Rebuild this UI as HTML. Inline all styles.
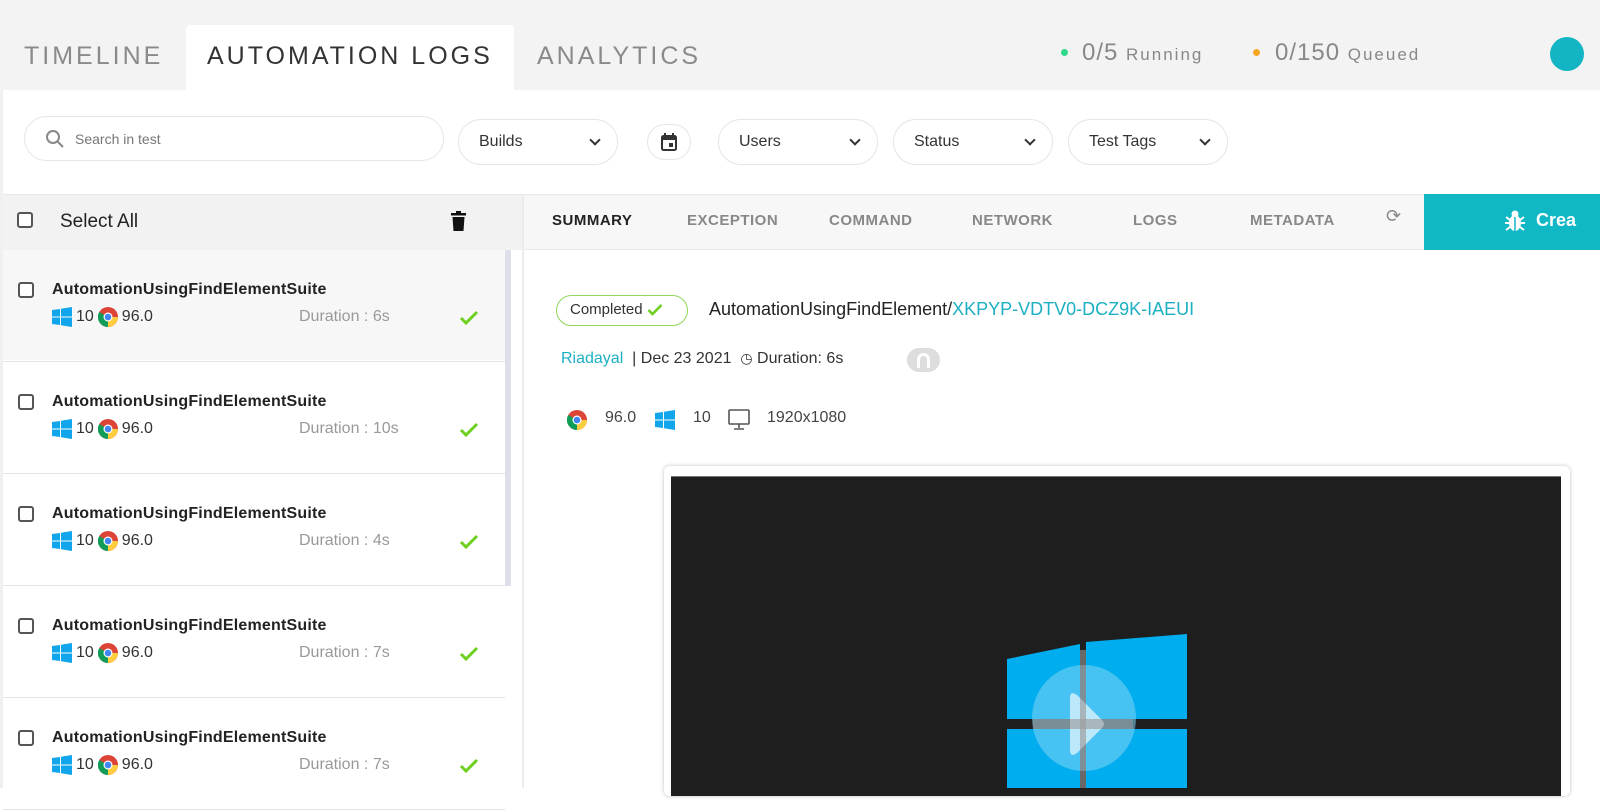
<!DOCTYPE html>
<html><head><style>
*{box-sizing:border-box;margin:0;padding:0}
body{width:1600px;height:788px;overflow:hidden;background:#fff;font-family:"Liberation Sans",sans-serif;position:relative}
.a{position:absolute}
.hdr{left:0;top:0;width:1600px;height:90px;background:#f3f3f3}
.tab{font-size:25px;letter-spacing:3px;color:#8a8a8a;top:42px}
.pill{border:1px solid #e6e6e6;border-radius:24px;background:#fff;height:46px;top:119px;font-size:16px;color:#333;padding:0 20px;line-height:44px}
.chev{position:absolute;right:18px;top:16px;width:8px;height:8px;border-right:2.5px solid #333;border-bottom:2.5px solid #333;transform:rotate(45deg)}
.cb{width:16px;height:16px;border:2px solid #555;border-radius:3px;background:#fff}
.rt{font-size:15px;color:#555;letter-spacing:.5px;top:212px;font-weight:bold}
.item{left:3px;width:502px;height:112px;border-bottom:1px solid #e4e4e4}
.item .t{position:absolute;left:49px;top:31px;font-size:16px;font-weight:bold;color:#222;letter-spacing:.2px}
.item .cb{position:absolute;left:15px;top:32px}
.item .m{position:absolute;left:49px;top:57px;font-size:16px;color:#333;display:flex;align-items:center;gap:4px}
.item .d{position:absolute;left:296px;top:58px;font-size:16px;color:#999}
.item .ck{position:absolute;left:456px;top:60px}
</style></head><body>
<div class="a hdr"></div>
<div class="a" style="left:186px;top:25px;width:328px;height:66px;background:#fff;border-radius:4px 4px 0 0"></div>
<div class="a tab" style="left:24px">TIMELINE</div>
<div class="a tab" style="left:207px;color:#333">AUTOMATION LOGS</div>
<div class="a tab" style="left:537px">ANALYTICS</div>
<div class="a" style="left:1061px;top:49px;width:7px;height:7px;border-radius:50%;background:#2fd88a"></div>
<div class="a" style="left:1082px;top:39px;font-size:24px;color:#888;letter-spacing:1px">0/5 <span style="font-size:17px;letter-spacing:2px">Running</span></div>
<div class="a" style="left:1253px;top:49px;width:7px;height:7px;border-radius:50%;background:#f5a623"></div>
<div class="a" style="left:1275px;top:39px;font-size:24px;color:#888;letter-spacing:1px">0/150 <span style="font-size:17px;letter-spacing:2px">Queued</span></div>
<div class="a" style="left:1550px;top:37px;width:34px;height:34px;border-radius:50%;background:#13b4c4"></div>

<div class="a pill" style="left:24px;top:116px;width:420px;height:45px;padding-left:50px;font-size:14px;color:#777">
<svg class="a" style="left:20px;top:12px" width="20" height="20" viewBox="0 0 20 20"><circle cx="8" cy="8" r="6" fill="none" stroke="#888" stroke-width="2"/><line x1="12.5" y1="12.5" x2="18" y2="18" stroke="#888" stroke-width="2"/></svg>Search in test</div>
<div class="a pill" style="left:458px;width:160px;top:119px">Builds<span class="chev"></span></div>
<div class="a pill" style="left:647px;top:124px;width:44px;height:36px;padding:0">
<svg class="a" style="left:13px;top:8px" width="16" height="18" viewBox="0 0 16 18"><rect x="1" y="3" width="14" height="14" rx="1.5" fill="none" stroke="#333" stroke-width="2"/><rect x="1" y="3" width="14" height="4" fill="#333"/><rect x="3" y="0" width="2" height="4" fill="#333"/><rect x="11" y="0" width="2" height="4" fill="#333"/><rect x="8" y="10" width="4" height="4" fill="#333"/></svg></div>
<div class="a pill" style="left:718px;width:160px">Users<span class="chev"></span></div>
<div class="a pill" style="left:893px;width:160px">Status<span class="chev"></span></div>
<div class="a pill" style="left:1068px;width:160px">Test Tags<span class="chev"></span></div>

<div class="a" style="left:0;top:90px;width:3px;height:698px;background:#f0f0f0"></div>
<div class="a" style="left:3px;top:194px;width:519px;height:56px;background:#f2f2f2;border-top:1px solid #e8e8e8"></div>
<div class="a cb" style="left:17px;top:212px"></div>
<div class="a" style="left:60px;top:211px;font-size:19px;color:#222">Select All</div>
<svg class="a" style="left:451px;top:211px" width="15" height="20" viewBox="0 0 15 20"><rect x="0" y="2" width="15" height="2.5" fill="#111"/><rect x="5" y="0" width="5" height="2" fill="#111"/><path d="M1.5 6h12l-1 14h-10z" fill="#111"/></svg>
<div class="a" style="left:522px;top:194px;width:2px;height:594px;background:#ececec"></div>
<div class="a" style="left:505px;top:250px;width:6px;height:336px;background:#dde0ea"></div>

<div class="a" style="left:524px;top:194px;width:900px;height:56px;background:#f7f7f7;border-top:1px solid #e8e8e8;border-bottom:1px solid #e8e8e8"></div>
<div class="a rt" style="left:552px;color:#222">SUMMARY</div>
<div class="a rt" style="left:687px;color:#888">EXCEPTION</div>
<div class="a rt" style="left:829px;color:#888">COMMAND</div>
<div class="a rt" style="left:972px;color:#888">NETWORK</div>
<div class="a rt" style="left:1133px;color:#888">LOGS</div>
<div class="a rt" style="left:1250px;color:#888">METADATA</div>
<div class="a" style="left:1386px;top:206px;font-size:18px;color:#888">⟳</div>
<div class="a" style="left:1424px;top:194px;width:176px;height:56px;background:#10b7c5"></div>
<svg class="a" style="left:1504px;top:209px" width="22" height="24" viewBox="0 0 22 24"><ellipse cx="11" cy="14" rx="6" ry="8" fill="#fff"/><circle cx="11" cy="5" r="3.5" fill="#fff"/><path d="M2 8l4 3M20 8l-4 3M1 14h5M21 14h-5M2 21l4-3M20 21l-4-3" stroke="#fff" stroke-width="2"/><line x1="11" y1="8" x2="11" y2="22" stroke="#10b7c5" stroke-width="1.5"/></svg>
<div class="a" style="left:1536px;top:210px;font-size:18px;color:#fff;font-weight:bold">Crea</div>

<div class="a" style="left:3px;top:250px;width:502px;height:110px;background:#f7f7f7"></div>
<!-- items -->
<div class="a item" style="top:250px"><span class="cb"></span><div class="t">AutomationUsingFindElementSuite</div><div class="m"><svg width="20" height="20" viewBox="0 0 20 20"><path d="M0 3l8-1v7.5H0zM9 1.8L20 0v9.5H9zM0 10.5h8V18l-8-1zM9 10.5h11V20L9 18.2z" fill="#11a5ec"/></svg>10 <svg width="20" height="20" viewBox="0 0 20 20"><circle cx="10" cy="10" r="10" fill="#db4437"/><path d="M10 10L1.3 5A10 10 0 0 0 10 20z" fill="#0f9d58"/><path d="M10 10h10A10 10 0 0 1 10 20z" fill="#ffcd40"/><circle cx="10" cy="10" r="4.5" fill="#fff"/><circle cx="10" cy="10" r="3.3" fill="#4285f4"/></svg>96.0</div><div class="d">Duration : 6s</div><svg class="ck" width="20" height="15" viewBox="0 0 20 15"><path d="M2 8l5 5L18 2" stroke="#6fcf1f" stroke-width="3" fill="none"/></svg></div>
<div class="a item" style="top:362px"><span class="cb"></span><div class="t">AutomationUsingFindElementSuite</div><div class="m"><svg width="20" height="20" viewBox="0 0 20 20"><path d="M0 3l8-1v7.5H0zM9 1.8L20 0v9.5H9zM0 10.5h8V18l-8-1zM9 10.5h11V20L9 18.2z" fill="#11a5ec"/></svg>10 <svg width="20" height="20" viewBox="0 0 20 20"><circle cx="10" cy="10" r="10" fill="#db4437"/><path d="M10 10L1.3 5A10 10 0 0 0 10 20z" fill="#0f9d58"/><path d="M10 10h10A10 10 0 0 1 10 20z" fill="#ffcd40"/><circle cx="10" cy="10" r="4.5" fill="#fff"/><circle cx="10" cy="10" r="3.3" fill="#4285f4"/></svg>96.0</div><div class="d">Duration : 10s</div><svg class="ck" width="20" height="15" viewBox="0 0 20 15"><path d="M2 8l5 5L18 2" stroke="#6fcf1f" stroke-width="3" fill="none"/></svg></div>
<div class="a item" style="top:474px"><span class="cb"></span><div class="t">AutomationUsingFindElementSuite</div><div class="m"><svg width="20" height="20" viewBox="0 0 20 20"><path d="M0 3l8-1v7.5H0zM9 1.8L20 0v9.5H9zM0 10.5h8V18l-8-1zM9 10.5h11V20L9 18.2z" fill="#11a5ec"/></svg>10 <svg width="20" height="20" viewBox="0 0 20 20"><circle cx="10" cy="10" r="10" fill="#db4437"/><path d="M10 10L1.3 5A10 10 0 0 0 10 20z" fill="#0f9d58"/><path d="M10 10h10A10 10 0 0 1 10 20z" fill="#ffcd40"/><circle cx="10" cy="10" r="4.5" fill="#fff"/><circle cx="10" cy="10" r="3.3" fill="#4285f4"/></svg>96.0</div><div class="d">Duration : 4s</div><svg class="ck" width="20" height="15" viewBox="0 0 20 15"><path d="M2 8l5 5L18 2" stroke="#6fcf1f" stroke-width="3" fill="none"/></svg></div>
<div class="a item" style="top:586px"><span class="cb"></span><div class="t">AutomationUsingFindElementSuite</div><div class="m"><svg width="20" height="20" viewBox="0 0 20 20"><path d="M0 3l8-1v7.5H0zM9 1.8L20 0v9.5H9zM0 10.5h8V18l-8-1zM9 10.5h11V20L9 18.2z" fill="#11a5ec"/></svg>10 <svg width="20" height="20" viewBox="0 0 20 20"><circle cx="10" cy="10" r="10" fill="#db4437"/><path d="M10 10L1.3 5A10 10 0 0 0 10 20z" fill="#0f9d58"/><path d="M10 10h10A10 10 0 0 1 10 20z" fill="#ffcd40"/><circle cx="10" cy="10" r="4.5" fill="#fff"/><circle cx="10" cy="10" r="3.3" fill="#4285f4"/></svg>96.0</div><div class="d">Duration : 7s</div><svg class="ck" width="20" height="15" viewBox="0 0 20 15"><path d="M2 8l5 5L18 2" stroke="#6fcf1f" stroke-width="3" fill="none"/></svg></div>
<div class="a item" style="top:698px"><span class="cb"></span><div class="t">AutomationUsingFindElementSuite</div><div class="m"><svg width="20" height="20" viewBox="0 0 20 20"><path d="M0 3l8-1v7.5H0zM9 1.8L20 0v9.5H9zM0 10.5h8V18l-8-1zM9 10.5h11V20L9 18.2z" fill="#11a5ec"/></svg>10 <svg width="20" height="20" viewBox="0 0 20 20"><circle cx="10" cy="10" r="10" fill="#db4437"/><path d="M10 10L1.3 5A10 10 0 0 0 10 20z" fill="#0f9d58"/><path d="M10 10h10A10 10 0 0 1 10 20z" fill="#ffcd40"/><circle cx="10" cy="10" r="4.5" fill="#fff"/><circle cx="10" cy="10" r="3.3" fill="#4285f4"/></svg>96.0</div><div class="d">Duration : 7s</div><svg class="ck" width="20" height="15" viewBox="0 0 20 15"><path d="M2 8l5 5L18 2" stroke="#6fcf1f" stroke-width="3" fill="none"/></svg></div>

<!-- summary -->
<div class="a" style="left:556px;top:295px;width:132px;height:31px;border:1.5px solid #8fd65a;border-radius:16px;font-size:15px;color:#333;line-height:28px;padding-left:13px">Completed <svg style="vertical-align:-2px" width="16" height="13" viewBox="0 0 16 13"><path d="M1.5 7l4 4L14.5 2" stroke="#6fcf1f" stroke-width="2.6" fill="none"/></svg></div>
<div class="a" style="left:709px;top:299px;font-size:18px;color:#222">AutomationUsingFindElement/<span style="color:#1cb0c2">XKPYP-VDTV0-DCZ9K-IAEUI</span></div>
<div class="a" style="left:561px;top:350px;font-size:16px;color:#333"><span style="color:#1cb0c2">Riadayal</span> &nbsp;| Dec 23 2021 &nbsp;<span style="font-size:14px">◷</span> Duration: 6s</div>
<div class="a" style="left:907px;top:348px;width:33px;height:24px;border-radius:12px;background:#ddd"><div class="a" style="left:10px;top:5px;width:13px;height:15px;border:3px solid #fff;border-bottom:none;border-radius:7px 7px 0 0"></div></div>
<svg class="a" style="left:567px;top:410px" width="20" height="20" viewBox="0 0 20 20"><circle cx="10" cy="10" r="10" fill="#db4437"/><path d="M10 10L1.3 5A10 10 0 0 0 10 20z" fill="#0f9d58"/><path d="M10 10h10A10 10 0 0 1 10 20z" fill="#ffcd40"/><circle cx="10" cy="10" r="4.5" fill="#fff"/><circle cx="10" cy="10" r="3.3" fill="#4285f4"/></svg>
<div class="a" style="left:605px;top:409px;font-size:16px;color:#444">96.0</div>
<svg class="a" style="left:655px;top:410px" width="20" height="20" viewBox="0 0 20 20"><path d="M0 3l8-1v7.5H0zM9 1.8L20 0v9.5H9zM0 10.5h8V18l-8-1zM9 10.5h11V20L9 18.2z" fill="#11a5ec"/></svg>
<div class="a" style="left:693px;top:409px;font-size:16px;color:#444">10</div>
<svg class="a" style="left:728px;top:409px" width="22" height="22" viewBox="0 0 22 22"><rect x="1" y="1" width="20" height="14" rx="1" fill="none" stroke="#555" stroke-width="1.6"/><path d="M11 15v4M6 20h10" stroke="#555" stroke-width="1.6"/></svg>
<div class="a" style="left:767px;top:409px;font-size:16px;color:#444">1920x1080</div>

<div class="a" style="left:664px;top:466px;width:906px;height:330px;background:#fff;border-radius:6px;box-shadow:0 0 4px rgba(0,0,0,.25)"></div>
<div class="a" style="left:671px;top:476px;width:890px;height:320px;background:#1e1e1e;border-top:1px solid #777"></div>
<svg class="a" style="left:1000px;top:630px" width="200" height="158" viewBox="0 0 200 158">
<path d="M7 29L80 14V89H7z" fill="#00adef"/><path d="M86 12L187 4V89H86z" fill="#00adef"/>
<rect x="7" y="99" width="73" height="60" fill="#00adef"/><rect x="86" y="99" width="101" height="60" fill="#00adef"/>
<ellipse cx="84" cy="88" rx="52" ry="53" fill="#7fd3f5" opacity=".55"/>
<path d="M70 68q0-8 7-3l25 25q4 4 0 8l-25 25q-7 5-7-3z" fill="#d8f1fc" opacity=".8"/>
<rect x="80" y="20" width="6" height="140" fill="#999" opacity=".6"/><rect x="33" y="89" width="100" height="10" fill="#999" opacity=".55"/>
</svg>
</body></html>
